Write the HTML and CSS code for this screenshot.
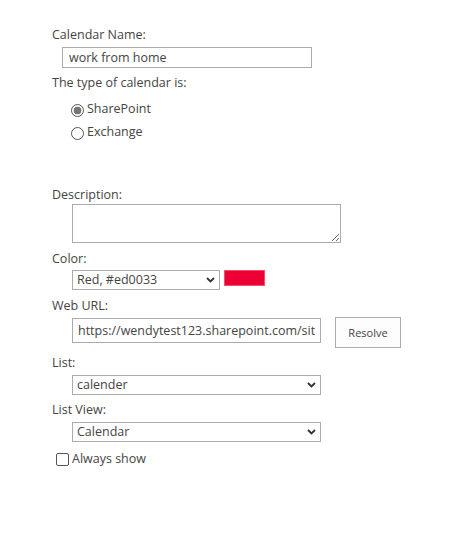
FILE: index.html
```html
<!DOCTYPE html>
<html>
<head>
<meta charset="utf-8">
<link rel="stylesheet" href="styles.css">
</head>
<body>
<form class="form">
  <div class="label">Calendar Name:</div>
  <input class="text name-input" type="text" value="work from home">
  <div class="label gap-6">The type of calendar is:</div>
  <label class="radio-row first-radio"><input type="radio" name="type" checked><span>SharePoint</span></label>
  <label class="radio-row second-radio"><input type="radio" name="type"><span>Exchange</span></label>
  <div class="label desc-label">Description:</div>
  <textarea class="desc"></textarea>
  <div class="label gap-7">Color:</div>
  <div class="color-row">
    <span class="select-wrap color-select">
      <select><option>Red, #ed0033</option></select>
      <svg class="chev" width="9" height="6" viewBox="0 0 9 6"><path d="M1 1 L4.5 4.5 L8 1" fill="none" stroke="#333" stroke-width="1.8"/></svg>
    </span>
    <span class="swatch"></span>
  </div>
  <div class="label gap-7">Web URL:</div>
  <div class="url-row">
    <input class="text url" type="text" value="https://wendytest123.sharepoint.com/sites/test">
    <button type="button" class="resolve">Resolve</button>
  </div>
  <div class="label gap-6">List:</div>
  <span class="select-wrap wide-select">
    <select><option>calender</option></select>
    <svg class="chev" width="9" height="6" viewBox="0 0 9 6"><path d="M1 1 L4.5 4.5 L8 1" fill="none" stroke="#333" stroke-width="1.8"/></svg>
  </span>
  <div class="label gap-6">List View:</div>
  <span class="select-wrap wide-select">
    <select><option>Calendar</option></select>
    <svg class="chev" width="9" height="6" viewBox="0 0 9 6"><path d="M1 1 L4.5 4.5 L8 1" fill="none" stroke="#333" stroke-width="1.8"/></svg>
  </span>
  <label class="check-row"><input type="checkbox"><span>Always show</span></label>
</form>
</body>
</html>
```

FILE: styles.css
```css
* { box-sizing: border-box; }
html, body { margin: 0; padding: 0; background: #fff; }
body {
  font-family: "Open Sans", "Noto Sans", sans-serif;
  font-size: 12.5px;
  color: #444;
}
.form {
  display: flex;
  flex-direction: column;
  align-items: flex-start;
  padding: 26px 0 0 52px;
}
.label {
  height: 18px;
  line-height: 18px;
  white-space: nowrap;
}
.gap-6 { margin-top: 6px; }
.gap-7 { margin-top: 7px; }
.text {
  font-family: inherit;
  font-size: 12.5px;
  color: #444;
  border: 1px solid #ababab;
  border-radius: 0;
  background: #fff;
  outline: none;
  margin: 0;
}
.name-input {
  margin: 3px 0 0 10px;
  width: 250px;
  height: 21px;
  padding: 0 6px;
}
.radio-row {
  display: flex;
  align-items: center;
  height: 18px;
  line-height: 18px;
  margin-left: 19px;
}
.first-radio { margin-top: 8px; }
.second-radio { margin-top: 5px; }
.radio-row input {
  appearance: none;
  -webkit-appearance: none;
  width: 13px;
  height: 13px;
  margin: 2px 3px 0 0;
  border: 1px solid #555;
  border-radius: 50%;
  background: #fff;
}
.radio-row input:checked {
  background: radial-gradient(circle, #777 0, #777 3.6px, #fff 4.2px);
}
.desc-label { margin-top: 45px; }
.desc {
  margin: 0 0 0 20px;
  width: 269px;
  height: 39px;
  border: 1px solid #ababab;
  border-radius: 0;
  resize: both;
  font-family: inherit;
}
.color-row {
  display: flex;
  align-items: flex-start;
  margin: 2px 0 0 20px;
}
.select-wrap {
  position: relative;
  display: block;
}
.select-wrap select {
  appearance: none;
  -webkit-appearance: none;
  display: block;
  width: 100%;
  height: 20px;
  margin: 0;
  padding: 0 20px 0 4px;
  border: 1px solid #ababab;
  border-radius: 0;
  background: #fff;
  font-family: inherit;
  font-size: 12.5px;
  color: #444;
  line-height: 18px;
}
.chev {
  position: absolute;
  right: 5px;
  top: 7px;
  pointer-events: none;
}
.color-select { width: 148px; }
.swatch {
  width: 41px;
  height: 16px;
  margin-left: 4px;
  background: #ed0033;
  border: 1px solid #f0506e;
}
.url-row {
  display: flex;
  align-items: flex-start;
  margin: 2px 0 0 20px;
}
.url {
  width: 249px;
  height: 25px;
  margin-top: 1px;
  padding: 0 5px;
}
.resolve {
  width: 66px;
  height: 31px;
  margin-left: 14px;
  padding: 0;
  border: 1px solid #ababab;
  border-radius: 0;
  background: #fdfdfd;
  font-family: inherit;
  font-size: 11px;
  color: #444;
}
.wide-select {
  width: 249px;
  margin: 3px 0 0 20px;
}
.check-row {
  display: flex;
  align-items: center;
  height: 18px;
  line-height: 18px;
  margin: 8px 0 0 4px;
}
.check-row input {
  appearance: none;
  -webkit-appearance: none;
  width: 13px;
  height: 13px;
  margin: 1px 3px 0 0;
  border: 1px solid #555;
  border-radius: 2px;
  background: #fff;
}
```
